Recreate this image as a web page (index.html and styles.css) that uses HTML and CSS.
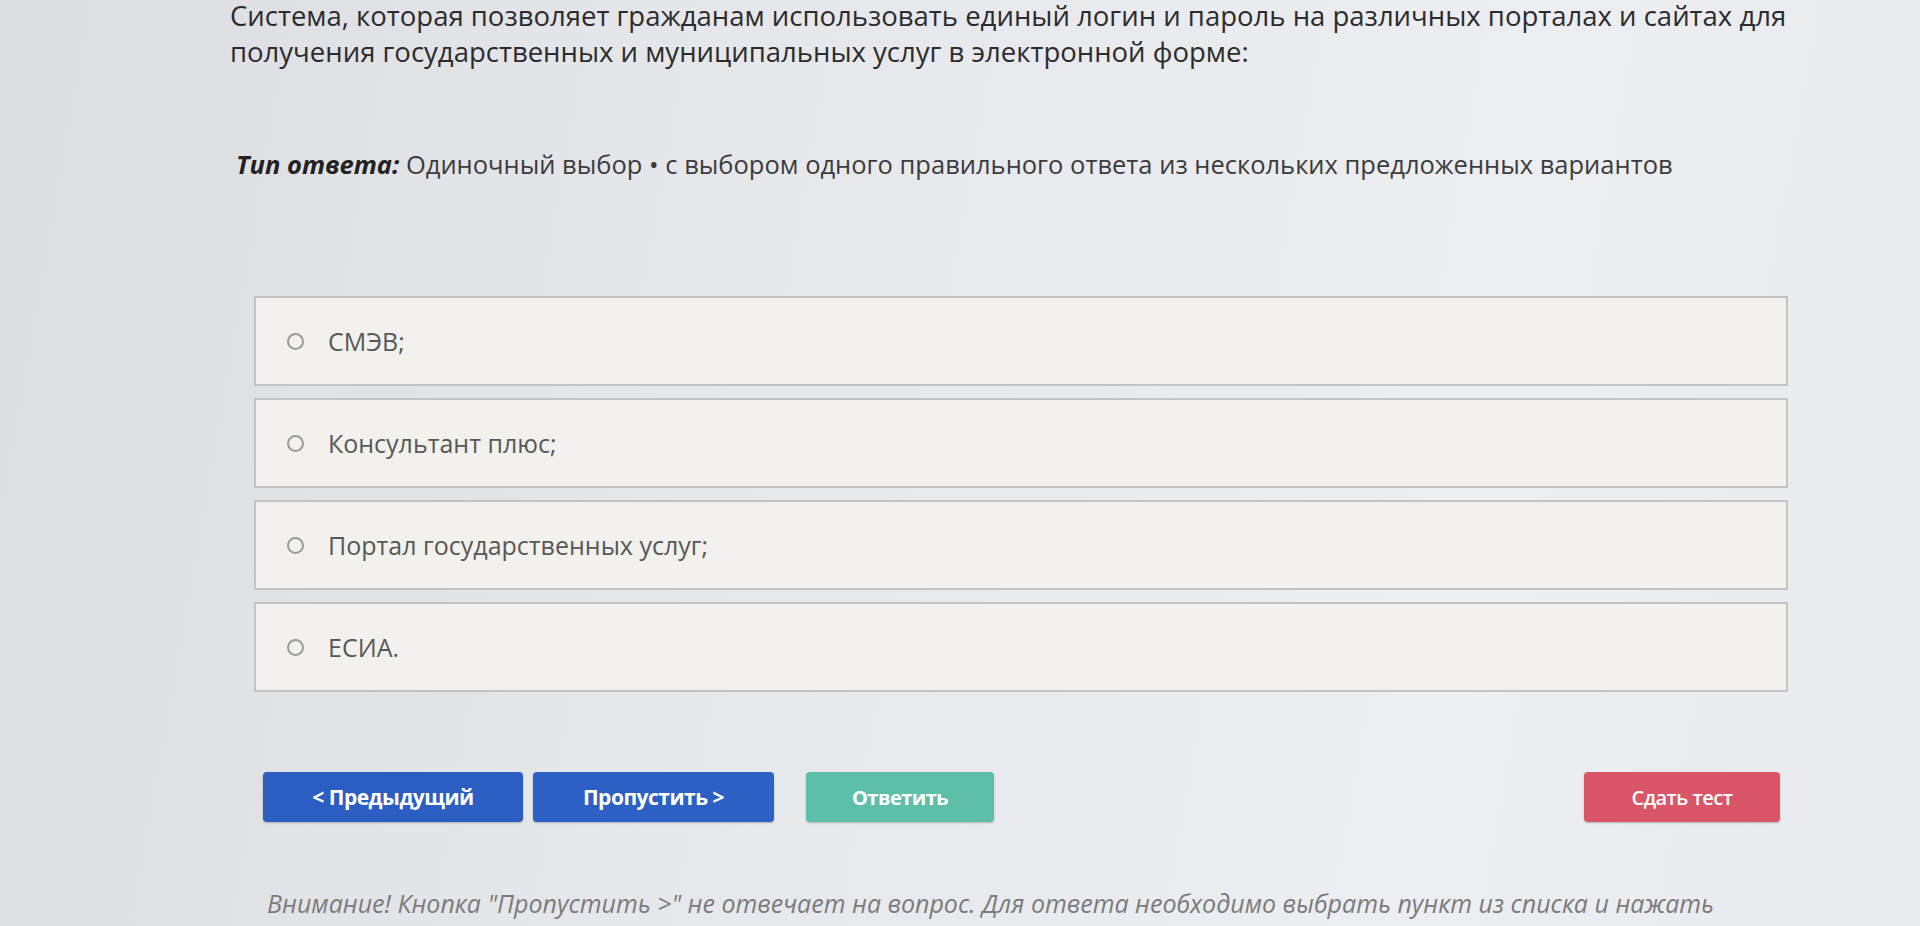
FILE: index.html
```html
<!DOCTYPE html>
<html lang="ru">
<head>
<meta charset="utf-8">
<title>Тест</title>
<link rel="stylesheet" href="styles.css">
</head>
<body>
<div class="page">
  <p class="question">Система, которая позволяет гражданам использовать единый логин и пароль на различных порталах и сайтах для<br>получения государственных и муниципальных услуг в электронной форме:</p>
  <p class="answer-type"><span class="label">Тип ответа:</span> Одиночный выбор • с выбором одного правильного ответа из нескольких предложенных вариантов</p>
  <ul class="options">
    <li class="option"><span class="radio"></span><span class="option-text">СМЭВ;</span></li>
    <li class="option"><span class="radio"></span><span class="option-text">Консультант плюс;</span></li>
    <li class="option"><span class="radio"></span><span class="option-text">Портал государственных услуг;</span></li>
    <li class="option"><span class="radio"></span><span class="option-text">ЕСИА.</span></li>
  </ul>
  <div class="actions">
    <button class="btn btn-prev">&lt; Предыдущий</button>
    <button class="btn btn-skip">Пропустить &gt;</button>
    <button class="btn btn-answer">Ответить</button>
    <button class="btn btn-finish">Сдать тест</button>
  </div>
  <p class="note">Внимание! Кнопка "Пропустить &gt;" не отвечает на вопрос. Для ответа необходимо выбрать пункт из списка и нажать</p>
</div>
</body>
</html>
```
FILE: styles.css
```css
html, body {
  margin: 0;
  height: 926px;
  overflow: hidden;
}
body {
  background: linear-gradient(100deg, #dcdde0 0%, #e6e7ea 35%, #eceef1 75%, #e9eaed 100%);
  font-family: "Open Sans", "Noto Sans", sans-serif;
}
.page {
  padding-left: 230px;
}
.question {
  margin: -2px 0 0;
  font-size: 27.5px;
  line-height: 36px;
  color: #2c2c2e;
  white-space: nowrap;
}
.answer-type {
  margin: 76px 0 0 6px;
  font-size: 25.5px;
  line-height: 36px;
  color: #3c3c3e;
  white-space: nowrap;
}
.label {
  font-weight: 700;
  font-style: italic;
  color: #222;
}
.options {
  list-style: none;
  margin: 114px 0 0 24px;
  padding: 0;
  width: 1534px;
  display: flex;
  flex-direction: column;
  gap: 12px;
}
.option {
  box-sizing: border-box;
  height: 90px;
  border: 2px solid #c3c3c3;
  background: #f2f1ed;
  display: flex;
  align-items: center;
  padding-left: 31px;
  gap: 24px;
  font-size: 25px;
  color: #585858;
}
.radio {
  box-sizing: border-box;
  width: 17px;
  height: 17px;
  border: 2px solid #9a9a9a;
  border-radius: 50%;
  flex: none;
}
.actions {
  margin: 80px 0 0 33px;
  width: 1517px;
  display: flex;
  gap: 10px;
}
.btn {
  height: 50px;
  border: none;
  border-radius: 4px;
  color: #fff;
  font-family: "Open Sans", "Noto Sans", sans-serif;
  font-size: 21px;
  font-weight: 700;
  letter-spacing: -0.5px;
  box-shadow: 0 1px 2px rgba(0, 0, 0, 0.25);
  padding: 0;
}
.btn-prev {
  width: 260px;
  background: #2b5dc2;
}
.btn-skip {
  width: 241px;
  background: #2d60c4;
}
.btn-answer {
  width: 188px;
  margin-left: 22px;
  background: #5dbfa8;
  font-size: 20px;
}
.btn-finish {
  width: 196px;
  margin-left: auto;
  background: #d95669;
  font-size: 20px;
  font-weight: 600;
}
.note {
  margin: 66px 0 0 37px;
  font-size: 25px;
  line-height: 30px;
  font-style: italic;
  color: #7b7b7d;
  white-space: nowrap;
}
```
